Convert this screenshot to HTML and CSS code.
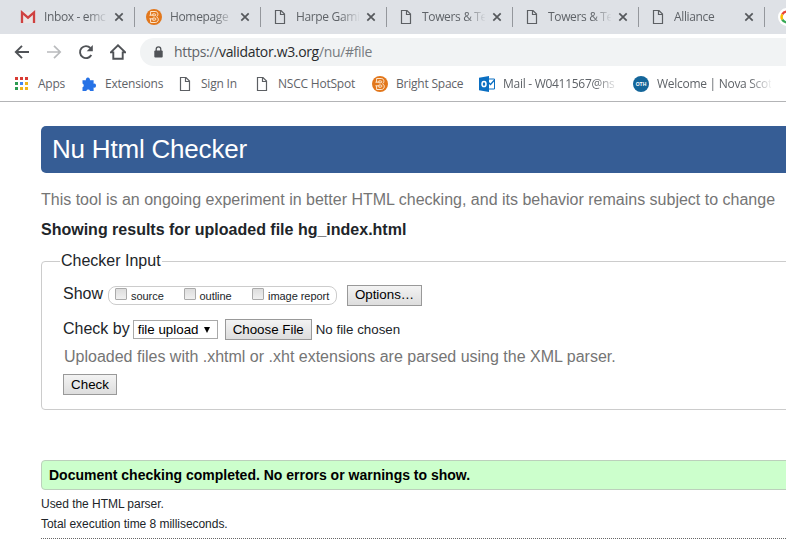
FILE: index.html
```html
<!DOCTYPE html>
<html lang="en">
<head>
<meta charset="utf-8">
<title>Nu Html Checker</title>
<link rel="stylesheet" href="styles.css">
</head>
<body>
<svg width="0" height="0" class="defs">
  <symbol id="page" viewBox="0 0 16 16"><path d="M3.5 1.5h5.5l3.5 3.5v9.5h-9zM8.5 1.5v4h4" fill="none" stroke="#5c5f63" stroke-width="1.2"/></symbol>
  <symbol id="close" viewBox="0 0 10 10"><path d="M1.3 1.3l7.4 7.4M8.7 1.3L1.3 8.7" stroke="#55585c" stroke-width="1.7"/></symbol>
  <symbol id="bright" viewBox="0 0 16 16"><circle cx="8" cy="8" r="8" fill="#e2771c"/><path d="M4.6 2.5h4.6c3.2 0 3.4 4 1.4 5.3 2.6 1.2 2.2 5.7-1.4 5.7H4.6V9.8M4.6 2.5v3.7M3.4 6.2h3.2M3.4 9.8h3.2M6.8 4.9h2.1c1.2 0 1.2 1.9 0 1.9H6.8zM6.8 9h2.1c1.3 0 1.3 2.2 0 2.2H6.8z" fill="none" stroke="#fff3e2" stroke-width=".9"/></symbol>
</svg>
<header class="browser">
  <nav class="tabs">
    <div class="tab"><svg class="icon" viewBox="0 0 16 16"><path d="M1 3h14v11H1z" fill="#e9e5e5"/><path d="M2 14V3.5l6 5.2 6-5.2V14" fill="none" stroke="#cf4140" stroke-width="2.3"/></svg><span class="title">Inbox - emc</span><svg class="x"><use href="#close"/></svg></div>
    <div class="tab"><svg class="icon"><use href="#bright"/></svg><span class="title">Homepage</span><svg class="x"><use href="#close"/></svg></div>
    <div class="tab"><svg class="icon"><use href="#page"/></svg><span class="title">Harpe Gami</span><svg class="x"><use href="#close"/></svg></div>
    <div class="tab"><svg class="icon"><use href="#page"/></svg><span class="title">Towers &amp; Te</span><svg class="x"><use href="#close"/></svg></div>
    <div class="tab"><svg class="icon"><use href="#page"/></svg><span class="title">Towers &amp; Te</span><svg class="x"><use href="#close"/></svg></div>
    <div class="tab"><svg class="icon"><use href="#page"/></svg><span class="title">Alliance</span><svg class="x"><use href="#close"/></svg></div>
    <div class="tab"><svg class="icon google" viewBox="0 0 18 18"><circle cx="9" cy="9" r="9" fill="#fff"/><g fill="none" stroke-width="2.4"><path d="M4.3 6.3A5.4 5.4 0 0 1 13 5.3" stroke="#e94335"/><path d="M4.3 11.7a5.4 5.4 0 0 1 0-5.4" stroke="#fbbc05"/><path d="M13 12.7a5.4 5.4 0 0 1-8.7-1" stroke="#34a853"/><path d="M9 9h5.4a5.4 5.4 0 0 1-1.4 3.7" stroke="#4285f4"/></g></svg></div>
  </nav>
  <div class="toolbar">
    <svg class="nav" viewBox="0 0 16 16"><path d="M15 8H2M8 1.8L1.8 8 8 14.2" fill="none" stroke="#505357" stroke-width="1.9"/></svg>
    <svg class="nav" viewBox="0 0 16 16"><path d="M1 8h13M8 1.8L14.2 8 8 14.2" fill="none" stroke="#b9bbbd" stroke-width="1.7"/></svg>
    <svg class="nav" viewBox="0 0 16 16"><path d="M13.3 11A6 6 0 1 1 12.4 4" fill="none" stroke="#505357" stroke-width="1.9"/><path d="M14.8 1v6.2H8.7z" fill="#505357"/></svg>
    <svg class="nav" viewBox="0 0 16 16"><path d="M.8 8.4L8 1.3l7.2 7.1h-2.5v6.3H3.3V8.4z" fill="none" stroke="#505357" stroke-width="1.9"/></svg>
    <div class="omnibox">
      <svg class="lock" viewBox="0 0 9 12"><path d="M2.2 5V3.2a2.3 2.3 0 0 1 4.6 0V5" fill="none" stroke="#505357" stroke-width="1.3"/><rect x=".3" y="4.4" width="8.4" height="7.2" rx="1" fill="#505357"/></svg>
      <span class="url">https://<b>validator.w3.org</b><i>/nu/#file</i></span>
    </div>
  </div>
  <nav class="bookmarks">
    <a><svg class="icon" viewBox="0 0 16 16"><g fill="#d93b33"><path d="M1 1h3v3H1zM6 1h3v3H6zM11 1h3v3h-3z"/></g><path d="M1 6h3v3H1zM1 11h3v3H1z" fill="#2c9b51"/><path d="M6 6h3v3H6z" fill="#4285f4"/><path d="M11 6h3v3h-3zM6 11h3v3H6zM11 11h3v3h-3z" fill="#f0b41c"/></svg><span>Apps</span></a>
    <a><svg class="icon" viewBox="0 0 16 16"><path d="M1.5 4.3h3.4a2.1 2.1 0 1 1 4 0h3.7v3.4a2 2 0 1 1 0 3.9V15H9.1a2 2 0 0 0-3.8 0H1.5v-3.7a2 2 0 0 0 0-3.7z" fill="#2672e6"/></svg><span>Extensions</span></a>
    <a><svg class="icon"><use href="#page"/></svg><span>Sign In</span></a>
    <a><svg class="icon"><use href="#page"/></svg><span>NSCC HotSpot</span></a>
    <a><svg class="icon"><use href="#bright"/></svg><span>Bright Space</span></a>
    <a><svg class="icon" viewBox="0 0 16 16"><path d="M8 3h7.5v10H8z" fill="#fff" stroke="#0b6fc2" stroke-width="1"/><path d="M9 6l2.5 2.5L15.5 4" fill="none" stroke="#0b6fc2" stroke-width="1.3"/><path d="M0 1.8L10 0v16L0 14.2z" fill="#0b6fc2"/><ellipse cx="5" cy="8" rx="2" ry="2.6" fill="none" stroke="#fff" stroke-width="1.5"/></svg><span class="fade">Mail - W0411567@ns</span></a>
    <a><svg class="icon" viewBox="0 0 16 16"><circle cx="8" cy="8" r="8" fill="#14669a"/><text x="8" y="10" text-anchor="middle" class="oth">OTH</text></svg><span class="fade">Welcome | Nova Scot</span></a>
  </nav>
</header>
<main class="page">
  <h1>Nu Html Checker</h1>
  <p class="intro">This tool is an ongoing experiment in better HTML checking, and its behavior remains subject to change</p>
  <h2>Showing results for uploaded file hg_index.html</h2>
  <fieldset>
    <legend>Checker Input</legend>
    <div class="row show">
      <span class="label">Show</span>
      <div class="options"><label><i class="check"></i>source</label><label><i class="check"></i>outline</label><label><i class="check"></i>image report</label></div>
      <button class="more">Options…</button>
    </div>
    <div class="row by">
      <span class="label">Check by</span>
      <span class="select">file upload<i class="arrow"></i></span>
      <button class="choose">Choose File</button><span class="none">No file chosen</span>
    </div>
    <p class="hint">Uploaded files with .xhtml or .xht extensions are parsed using the XML parser.</p>
    <button class="submit">Check</button>
  </fieldset>
  <p class="success">Document checking completed. No errors or warnings to show.</p>
  <p class="small">Used the HTML parser.</p>
  <p class="small">Total execution time 8 milliseconds.</p>
  <div class="rule"></div>
</main>
</body>
</html>
```
FILE: styles.css
```css
* { box-sizing: border-box; }
body { margin: 0; height: 546px; overflow: hidden; background: #fff; color: #212529; font-family: "Liberation Sans", Arial, sans-serif; font-size: 16px; }
.defs { display: none; }
p, h1, h2 { margin: 0; white-space: nowrap; }
.browser { height: 102px; border-bottom: 1px solid #b3b4b6; font-family: "Open Sans", "Noto Sans", sans-serif; font-size: 12px; color: #5f6368; }
.icon { width: 16px; height: 16px; flex: none; }
.tabs { display: flex; height: 34px; padding-left: 9px; background: #dee1e6; overflow: hidden; }
.tab { display: flex; align-items: center; flex: none; width: 126px; padding-left: 11px; }
.tab::after { content: ""; width: 1px; height: 20px; background: #94979c; margin-left: 10px; }
.title { width: 63px; margin: -1px 7px 0 8px; white-space: nowrap; letter-spacing: -.35px; mask-image: linear-gradient(to right, #000 44px, transparent 64px); }
.x { width: 10px; height: 10px; flex: none; }
.google { width: 18px; height: 18px; margin-left: 2px; }
.toolbar { display: flex; align-items: center; height: 36px; padding-left: 14px; }
.nav { width: 16px; height: 16px; margin-right: 16px; flex: none; }
.omnibox { display: flex; align-items: center; flex: 1; height: 28px; margin-left: -2px; padding-left: 14px; border-radius: 14px 0 0 14px; background: #f1f3f4; }
.lock { width: 9px; height: 12px; margin-right: 11px; }
.url { margin-top: -1px; font-size: 14px; letter-spacing: -.34px; color: #5f6368; }
.url b { color: #292b2e; font-weight: 400; }
.url i { color: #777b80; font-style: normal; }
.bookmarks { display: grid; grid-template-columns: 67px 96px 77px 118px 107px 154px 140px; height: 28px; padding-left: 14px; }
.bookmarks a { display: flex; align-items: center; gap: 8px; white-space: nowrap; letter-spacing: -.22px; }
.bookmarks span { margin-top: -1px; }
.bookmarks .fade { width: 114px; letter-spacing: -.28px; mask-image: linear-gradient(to right, #000 92px, transparent 116px); }
.oth { font: bold 5px "Liberation Sans", sans-serif; fill: #fff; letter-spacing: 0; }
.page { width: 800px; padding: 24px 0 0 41px; }
h1 { height: 47px; padding-left: 11px; border-radius: 5px; background: #365d95; color: #fff; font-size: 26px; line-height: 46px; font-weight: 400; letter-spacing: -.2px; }
.intro { margin-top: 17px; line-height: 20px; color: #757575; }
h2 { margin-top: 10px; font-size: 16px; line-height: 20px; }
fieldset { height: 159px; margin: 11px 0 0; padding: 14px 0 0 21px; border: 1px solid #ccc; border-radius: 4px; }
legend { margin-left: -3px; padding: 0 1px; line-height: 20px; }
.row { display: flex; align-items: center; white-space: nowrap; }
.show { height: 22px; margin-top: -1px; }
.options { display: flex; height: 19px; width: 229px; margin: 1px 10px 0 5px; padding-left: 6px; border: 1px solid #ccc; border-radius: 8px; font-size: 11px; line-height: 18px; letter-spacing: -.05px; }
.options label { display: flex; width: 68.5px; }
.check { width: 12px; height: 12px; margin: 1px 4px 0 0; border: 1px solid #aaa; border-radius: 1px; background: linear-gradient(#ddd, #f0f0f0); flex: none; }
button { height: 21px; padding: 0; border: 1px solid #999; border-radius: 0; background: linear-gradient(#f3f3f3, #ddd); color: #000; font: 13.33px "Liberation Sans", sans-serif; line-height: 18px; }
.more { width: 75px; }
.by { height: 21px; margin-top: 13px; }
.label { position: relative; top: -1px; }
.select { display: flex; align-items: center; width: 85px; height: 19px; margin: 0 7px 0 3px; padding-left: 4px; border: 1px solid #a9a9a9; color: #000; font-size: 13.33px; }
.arrow { margin-left: 6px; border: 3.5px solid transparent; border-top: 6px solid #000; border-bottom: 0; }
.choose { width: 87px; }
.none { margin-left: 4px; font-size: 13.33px; }
.hint { margin-top: 7px; padding-left: 1px; line-height: 20px; color: #757575; }
.submit { display: block; width: 54px; margin-top: 7px; }
.success { height: 30px; margin-top: 50px; padding-left: 7px; border: 1px solid #bcd0bc; border-radius: 4px; background: #cfc; color: #000; font-size: 14px; font-weight: 700; line-height: 29px; }
.small { font-size: 12px; line-height: 20px; letter-spacing: -.04px; }
.success + .small { margin-top: 4px; }
.rule { height: 1px; margin-top: 4px; background: repeating-linear-gradient(to right, #666 0 1px, transparent 1px 2px); }
```
